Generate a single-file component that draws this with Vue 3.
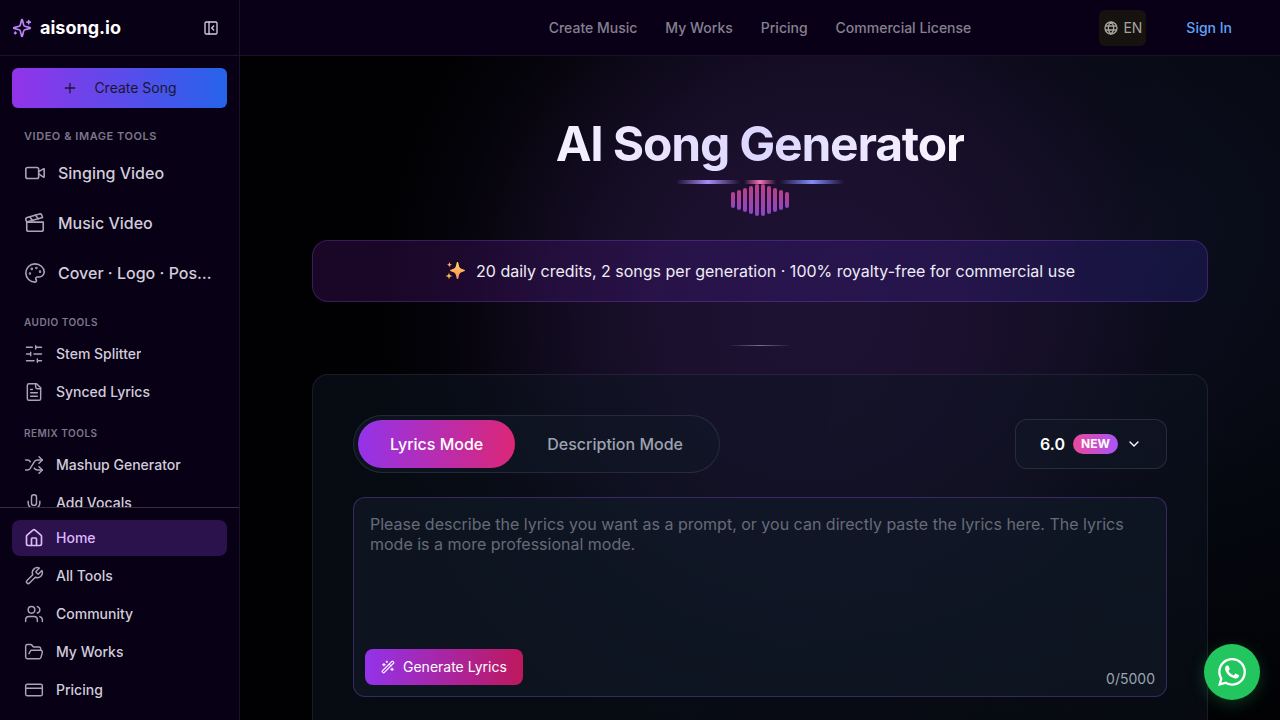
<script setup>
    import { ref } from 'vue'

    const icons = {
        video: '<path d="m16 13 5.223 3.482a.5.5 0 0 0 .777-.416V7.87a.5.5 0 0 0-.752-.432L16 10.5"/><rect x="2" y="6" width="14" height="12" rx="2"/>',
        clapper: '<path d="M20.2 6 3 11l-.9-2.4c-.3-1.1.3-2.2 1.3-2.5l13.5-4c1.1-.3 2.2.3 2.5 1.3Z"/><path d="m6.2 5.3 3.1 3.9"/><path d="m12.4 3.4 3.1 4"/><path d="M3 11h18v8a2 2 0 0 1-2 2H5a2 2 0 0 1-2-2Z"/>',
        palette: '<circle cx="13.5" cy="6.5" r=".5" fill="currentColor"/><circle cx="17.5" cy="10.5" r=".5" fill="currentColor"/><circle cx="8.5" cy="7.5" r=".5" fill="currentColor"/><circle cx="6.5" cy="12.5" r=".5" fill="currentColor"/><path d="M12 2C6.5 2 2 6.5 2 12s4.5 10 10 10c.926 0 1.648-.746 1.648-1.688 0-.437-.18-.835-.437-1.125-.29-.289-.438-.652-.438-1.125a1.64 1.64 0 0 1 1.668-1.668h1.996c3.051 0 5.555-2.503 5.555-5.554C21.965 6.012 17.461 2 12 2z"/>',
        sliders: '<path d="M21 4h-7M10 4H3M21 12h-9M8 12H3M21 20h-5M12 20H3M14 2v4M8 10v4M16 18v4"/>',
        file: '<path d="M15 2H6a2 2 0 0 0-2 2v16a2 2 0 0 0 2 2h12a2 2 0 0 0 2-2V7Z"/><path d="M14 2v4a2 2 0 0 0 2 2h4"/><path d="M10 9H8M16 13H8M16 17H8"/>',
        shuffle: '<path d="m18 14 4 4-4 4"/><path d="m18 2 4 4-4 4"/><path d="M2 18h1.973a4 4 0 0 0 3.3-1.7l5.454-8.6a4 4 0 0 1 3.3-1.7H22"/><path d="M2 6h1.972a4 4 0 0 1 3.6 2.2"/><path d="M22 18h-6.041a4 4 0 0 1-3.3-1.8l-.359-.45"/>',
        mic: '<path d="M12 2a3 3 0 0 0-3 3v7a3 3 0 0 0 6 0V5a3 3 0 0 0-3-3Z"/><path d="M19 10v2a7 7 0 0 1-14 0v-2"/><path d="M12 19v3"/>',
        home: '<path d="M15 21v-8a1 1 0 0 0-1-1h-4a1 1 0 0 0-1 1v8"/><path d="M3 10a2 2 0 0 1 .709-1.528l7-5.999a2 2 0 0 1 2.582 0l7 5.999A2 2 0 0 1 21 10v9a2 2 0 0 1-2 2H5a2 2 0 0 1-2-2z"/>',
        wrench: '<path d="M14.7 6.3a1 1 0 0 0 0 1.4l1.6 1.6a1 1 0 0 0 1.4 0l3.77-3.77a6 6 0 0 1-7.94 7.94l-6.91 6.91a2.12 2.12 0 0 1-3-3l6.91-6.91a6 6 0 0 1 7.94-7.94l-3.76 3.76z"/>',
        users: '<path d="M16 21v-2a4 4 0 0 0-4-4H6a4 4 0 0 0-4 4v2"/><circle cx="9" cy="7" r="4"/><path d="M22 21v-2a4 4 0 0 0-3-3.87"/><path d="M16 3.13a4 4 0 0 1 0 7.75"/>',
        folder: '<path d="m6 14 1.5-2.9A2 2 0 0 1 9.24 10H20a2 2 0 0 1 1.94 2.5l-1.54 6a2 2 0 0 1-1.95 1.5H4a2 2 0 0 1-2-2V5a2 2 0 0 1 2-2h3.9a2 2 0 0 1 1.69.9l.81 1.2a2 2 0 0 0 1.67.9H18a2 2 0 0 1 2 2v2"/>',
        card: '<rect x="2" y="5" width="20" height="14" rx="2"/><path d="M2 10h20"/>'
    }

    const videoTools = [
        { label: 'Singing Video', icon: 'video' },
        { label: 'Music Video', icon: 'clapper' },
        { label: 'Cover · Logo · Poster', icon: 'palette' }
    ]
    const toolGroups = [
        {
            title: 'Audio Tools',
            items: [
                { label: 'Stem Splitter', icon: 'sliders' },
                { label: 'Synced Lyrics', icon: 'file' }
            ]
        },
        {
            title: 'Remix Tools',
            items: [
                { label: 'Mashup Generator', icon: 'shuffle' },
                { label: 'Add Vocals', icon: 'mic' }
            ]
        }
    ]
    const mainLinks = [
        { label: 'Home', icon: 'home' },
        { label: 'All Tools', icon: 'wrench' },
        { label: 'Community', icon: 'users' },
        { label: 'My Works', icon: 'folder' },
        { label: 'Pricing', icon: 'card' }
    ]
    const topLinks = ['Create Music', 'My Works', 'Pricing', 'Commercial License']
    const modes = ['Lyrics Mode', 'Description Mode']
    const bars = [16, 20, 24, 28, 32, 32, 28, 24, 20, 16]

    const current = ref('Home')
    const mode = ref('Lyrics Mode')
    const version = ref('6.0')
    const lyrics = ref('')
</script>

<template>
    <div class="layout">
        <aside class="sidebar">
            <div class="brand">
                <a href="#" class="logo">
                    <svg class="icon" viewBox="0 0 24 24">
                        <path d="M9.937 15.5A2 2 0 0 0 8.5 14.063l-6.135-1.582a.5.5 0 0 1 0-.962L8.5 9.936A2 2 0 0 0 9.937 8.5l1.582-6.135a.5.5 0 0 1 .963 0L14.063 8.5A2 2 0 0 0 15.5 9.937l6.135 1.581a.5.5 0 0 1 0 .964L15.5 14.063a2 2 0 0 0-1.437 1.437l-1.582 6.135a.5.5 0 0 1-.963 0z" />
                        <path d="M20 3v4M22 5h-4M4 17v2M5 18H3" />
                    </svg>
                    <span>aisong.io</span>
                </a>
                <button class="collapse" aria-label="Collapse sidebar">
                    <svg class="icon" viewBox="0 0 24 24">
                        <rect x="3" y="3" width="18" height="18" rx="2" />
                        <path d="M9 3v18M16 15l-3-3 3-3" />
                    </svg>
                </button>
            </div>
            <button class="create">
                <svg class="icon" viewBox="0 0 24 24"><path d="M5 12h14M12 5v14" /></svg>
                <span>Create Song</span>
            </button>
            <nav class="tools">
                <h2 class="group-title large">Video &amp; Image Tools</h2>
                <ul class="large-list">
                    <li v-for="item in videoTools" :key="item.label">
                        <a href="#" class="side-link large">
                            <svg class="icon" viewBox="0 0 24 24" v-html="icons[item.icon]"></svg>
                            <span>{{ item.label }}</span>
                        </a>
                    </li>
                </ul>
                <template v-for="group in toolGroups" :key="group.title">
                    <h2 class="group-title">{{ group.title }}</h2>
                    <ul class="small-list">
                        <li v-for="item in group.items" :key="item.label">
                            <a href="#" class="side-link">
                                <svg class="icon" viewBox="0 0 24 24" v-html="icons[item.icon]"></svg>
                                <span>{{ item.label }}</span>
                            </a>
                        </li>
                    </ul>
                </template>
            </nav>
            <nav class="bottom">
                <ul class="small-list">
                    <li v-for="item in mainLinks" :key="item.label">
                        <a href="#" class="side-link" :class="{ active: current === item.label }" @click.prevent="current = item.label">
                            <svg class="icon" viewBox="0 0 24 24" v-html="icons[item.icon]"></svg>
                            <span>{{ item.label }}</span>
                        </a>
                    </li>
                </ul>
            </nav>
        </aside>

        <div class="page">
            <header class="topbar">
                <nav class="top-links">
                    <a v-for="link in topLinks" :key="link" href="#">{{ link }}</a>
                </nav>
                <div class="account">
                    <button class="lang">
                        <svg viewBox="0 0 24 24">
                            <circle cx="12" cy="12" r="9" />
                            <path d="M12 3c-3 2.5-4 5.5-4 9s1 6.5 4 9c3-2.5 4-5.5 4-9s-1-6.5-4-9M4 9h16M4 15h16" />
                        </svg>
                        <span>EN</span>
                    </button>
                    <a href="#" class="sign-in">Sign In</a>
                </div>
            </header>

            <main class="content">
                <h1>AI Song Generator</h1>
                <div class="glow-lines"><i></i><i></i><i></i></div>
                <div class="wave">
                    <span v-for="(h, i) in bars" :key="i" :style="{ height: h + 'px' }"></span>
                </div>

                <p class="banner">
                    <svg viewBox="0 0 20 20">
                        <defs>
                            <linearGradient id="gold" x1="0" y1="0" x2="0" y2="1">
                                <stop offset="0" stop-color="#ffd763" />
                                <stop offset="1" stop-color="#fb8a55" />
                            </linearGradient>
                        </defs>
                        <g fill="url(#gold)">
                            <path d="M12.5 1c.6 0 .8.5 1 1.5.7 4 1.5 5 5 6 1 .3 1.5.5 1.5 1s-.5.8-1.5 1c-3.5 1-4.3 2-5 6-.2 1-.4 1.5-1 1.5s-.8-.5-1-1.5c-.7-4-1.5-5-5-6-1-.2-1.5-.5-1.5-1s.5-.7 1.5-1c3.5-1 4.3-2 5-6 .2-1 .4-1.5 1-1.5z" />
                            <path d="M4.5 1c.5 2 .8 2.3 2.7 2.8-1.9.5-2.2.8-2.7 2.7C4 4.6 3.700 4.300 1.800 3.800 3.700 3.300 4 3 4.500 1z" />
                            <path d="M4 11.500c.5 2.500 1 3 3.500 3.500-2.500.5-3 1-3.500 3.500C3.500 16 3 15.500.5 15c2.500-.5 3-1 3.500-3.500z" />
                        </g>
                    </svg>
                    <span>20 daily credits, 2 songs per generation · 100% royalty-free for commercial use</span>
                </p>
                <div class="divider"></div>

                <section class="panel">
                    <div class="panel-head">
                        <div class="modes">
                            <button v-for="m in modes" :key="m" :class="{ active: mode === m }" @click="mode = m">{{ m }}</button>
                        </div>
                        <label class="version">
                            <select v-model="version" aria-label="Model version">
                                <option>6.0</option>
                                <option>5.0</option>
                            </select>
                            <span class="badge">NEW</span>
                            <svg class="icon" viewBox="0 0 24 24"><path d="m6 9 6 6 6-6" /></svg>
                        </label>
                    </div>
                    <div class="editor">
                        <textarea v-model="lyrics" maxlength="5000" aria-label="Lyrics" placeholder="Please describe the lyrics you want as a prompt, or you can directly paste the lyrics here. The lyrics mode is a more professional mode."></textarea>
                        <div class="editor-foot">
                            <button class="generate">
                                <svg class="icon" viewBox="0 0 24 24">
                                    <path d="m21.64 3.64-1.28-1.28a1.21 1.21 0 0 0-1.72 0L2.36 18.64a1.21 1.21 0 0 0 0 1.72l1.28 1.28a1.2 1.2 0 0 0 1.72 0L21.64 5.36a1.2 1.2 0 0 0 0-1.72" />
                                    <path d="m14 7 3 3M5 6v4M19 14v4M10 2v2M7 8H3M21 16h-4M11 3H9" />
                                </svg>
                                <span>Generate Lyrics</span>
                            </button>
                            <span class="count">{{ lyrics.length }}/5000</span>
                        </div>
                    </div>
                </section>
            </main>
        </div>

        <a href="#" class="whatsapp" aria-label="WhatsApp">
            <svg viewBox="0 0 24 24">
                <path d="M17.472 14.382c-.297-.149-1.758-.867-2.03-.967-.273-.099-.471-.148-.67.15-.197.297-.767.966-.94 1.164-.173.199-.347.223-.644.075-.297-.15-1.255-.463-2.39-1.475-.883-.788-1.48-1.761-1.653-2.059-.173-.297-.018-.458.13-.606.134-.133.298-.347.446-.52.149-.174.198-.298.298-.497.099-.198.05-.371-.025-.52-.075-.149-.669-1.612-.916-2.207-.242-.579-.487-.5-.669-.51-.173-.008-.371-.01-.57-.01-.198 0-.52.074-.792.372-.272.297-1.04 1.016-1.04 2.479 0 1.462 1.065 2.875 1.213 3.074.149.198 2.096 3.2 5.077 4.487.709.306 1.262.489 1.694.625.712.227 1.36.195 1.871.118.571-.085 1.758-.719 2.006-1.413.248-.694.248-1.289.173-1.413-.074-.124-.272-.198-.57-.347m-5.421 7.403h-.004a9.87 9.87 0 0 1-5.031-1.378l-.361-.214-3.741.982.998-3.648-.235-.374a9.86 9.86 0 0 1-1.51-5.26c.001-5.45 4.436-9.884 9.888-9.884 2.64 0 5.122 1.03 6.988 2.898a9.825 9.825 0 0 1 2.893 6.994c-.003 5.45-4.437 9.884-9.885 9.884m8.413-18.297A11.815 11.815 0 0 0 12.05 0C5.495 0 .16 5.335.157 11.892c0 2.096.547 4.142 1.588 5.945L.057 24l6.305-1.654a11.882 11.882 0 0 0 5.683 1.448h.005c6.554 0 11.89-5.335 11.893-11.893a11.821 11.821 0 0 0-3.48-8.413Z" />
            </svg>
        </a>
    </div>
</template>

<style>
    body{
        background: #000;
    }
</style>

<style scoped>
    *{
        box-sizing: border-box;
    }
    .layout{
        display: flex;
        height: 100vh;
        overflow: hidden;
        font-family: Inter, "Liberation Sans", sans-serif;
        font-size: 14px;
        line-height: 20px;
        color: #d1cdda;
    }
    a{
        color: inherit;
        text-decoration: none;
    }
    button, select, textarea{
        font: inherit;
        color: inherit;
        border: 0;
        background: none;
        padding: 0;
        margin: 0;
    }
    button, select{
        cursor: pointer;
    }
    ul{
        list-style: none;
        margin: 0;
        padding: 0;
    }
    .icon{
        width: 20px;
        height: 20px;
        flex: none;
        fill: none;
        stroke: currentColor;
        stroke-width: 2;
        stroke-linecap: round;
        stroke-linejoin: round;
    }

    /* sidebar */
    .sidebar{
        display: flex;
        flex-direction: column;
        flex: none;
        width: 240px;
        background: #080015;
        border-right: 1px solid #1a1426;
    }
    .brand{
        display: flex;
        align-items: center;
        justify-content: space-between;
        height: 56px;
        flex: none;
        padding: 0 20px 0 12px;
        border-bottom: 1px solid #1a1426;
    }
    .logo{
        display: flex;
        align-items: center;
        gap: 8px;
        font-size: 18px;
        font-weight: 700;
        color: #fff;
    }
    .logo .icon{
        color: #c084fc;
    }
    .collapse{
        display: flex;
    }
    .collapse .icon{
        width: 16px;
        height: 16px;
    }
    .create{
        display: flex;
        align-items: center;
        justify-content: center;
        gap: 16px;
        height: 40px;
        flex: none;
        margin: 12px 12px 0;
        border-radius: 6px;
        background: linear-gradient(90deg, #9333ea, #2563eb);
        color: #1b1530;
    }
    .create .icon{
        width: 16px;
        height: 16px;
    }
    .tools{
        flex: 1;
        min-height: 0;
        overflow: hidden;
        padding: 20px 12px 0;
    }
    .group-title{
        margin: 16px 0 7px;
        padding: 0 12px;
        font-size: 10px;
        line-height: 14px;
        font-weight: 600;
        letter-spacing: 0.05em;
        text-transform: uppercase;
        color: #7c7789;
    }
    .group-title.large{
        margin: 0 0 7px;
        font-size: 11px;
        line-height: 16px;
    }
    .large-list{
        display: grid;
        grid-template-columns: minmax(0, 1fr);
        gap: 6px;
        margin-bottom: 20px;
    }
    .small-list{
        display: grid;
        grid-template-columns: minmax(0, 1fr);
        gap: 2px;
    }
    .side-link{
        display: flex;
        align-items: center;
        gap: 12px;
        height: 36px;
        padding: 0 12px;
        border-radius: 8px;
        font-weight: 500;
    }
    .side-link .icon{
        stroke-width: 1.75;
        color: #aaa5b5;
    }
    .side-link span{
        overflow: hidden;
        white-space: nowrap;
        text-overflow: ellipsis;
    }
    .side-link.large{
        height: 44px;
        font-size: 16px;
        line-height: 24px;
    }
    .side-link.large .icon{
        width: 22px;
        height: 22px;
    }
    .side-link.active{
        background: #2b124c;
        color: #dcb9fd;
    }
    .side-link.active .icon{
        stroke-width: 2;
        color: #dcb9fd;
    }
    .bottom{
        flex: none;
        padding: 12px;
        border-top: 1px solid #342e40;
    }

    /* top bar */
    .page{
        display: flex;
        flex-direction: column;
        flex: 1;
        min-width: 0;
        background:
            radial-gradient(ellipse 42% 64% at 55% 43%, #1d1232 0%, rgba(28, 17, 48, 0.95) 35%, rgba(24, 15, 42, 0.7) 60%, rgba(16, 10, 30, 0.3) 82%, transparent 100%),
            radial-gradient(ellipse 48% 75% at 88% 32%, #0b0f1e, transparent),
            #010103;
    }
    .topbar{
        display: grid;
        grid-template-columns: 1fr auto 1fr;
        align-items: center;
        height: 56px;
        flex: none;
        padding: 0 32px;
        background: #090017;
        border-bottom: 1px solid #171225;
    }
    .top-links{
        grid-column: 2;
        display: flex;
        gap: 28px;
        font-weight: 500;
        color: #85808f;
    }
    .account{
        display: flex;
        align-items: center;
        justify-content: flex-end;
        gap: 24px;
    }
    .lang{
        display: flex;
        align-items: center;
        gap: 4px;
        height: 36px;
        padding: 0 4px;
        border-radius: 6px;
        background: #15120f;
        color: #a8a49f;
    }
    .lang svg{
        width: 16px;
        height: 16px;
        fill: none;
        stroke: currentColor;
        stroke-width: 2;
    }
    .sign-in{
        padding: 0 16px;
        font-weight: 500;
        color: #60a5fa;
    }

    /* content */
    .content{
        flex: 1;
        min-height: 0;
        overflow-y: auto;
        scrollbar-width: none;
        padding: 64px 72px;
    }
    h1{
        width: fit-content;
        margin: 0 auto;
        font-size: 48px;
        line-height: 48px;
        font-weight: 700;
        letter-spacing: -0.025em;
        padding-bottom: 12px;
        background: linear-gradient(90deg, #f5f1ff, #ddd6fe 50%, #faf7ff);
        background-clip: text;
        color: transparent;
    }
    .glow-lines{
        display: flex;
        justify-content: center;
        gap: 4px;
    }
    .glow-lines i{
        width: 64px;
        height: 4px;
        border-radius: 2px;
        background: linear-gradient(90deg, transparent, #a78bfa, transparent);
    }
    .glow-lines i:nth-child(2){
        width: 32px;
        background: linear-gradient(90deg, transparent, #f472b6, transparent);
    }
    .glow-lines i:nth-child(3){
        background: linear-gradient(90deg, transparent, #818cf8, transparent);
    }
    .wave{
        display: flex;
        align-items: center;
        justify-content: center;
        gap: 2px;
        height: 32px;
    }
    .wave span{
        width: 4px;
        border-radius: 2px;
        background: linear-gradient(#bd3f86, #8c46c4);
    }
    .banner{
        display: flex;
        align-items: center;
        justify-content: center;
        gap: 11px;
        margin: 24px 0 0;
        min-height: 62px;
        border: 1px solid rgba(168, 85, 247, 0.25);
        border-radius: 16px;
        background: linear-gradient(90deg, rgba(88, 20, 120, 0.3), rgba(70, 27, 140, 0.3) 50%, rgba(40, 36, 130, 0.35));
        font-size: 16px;
        line-height: 24px;
        color: #f0ecf6;
    }
    .banner svg{
        width: 20px;
        height: 20px;
    }
    .divider{
        width: 64px;
        height: 1px;
        margin: 43px auto 28px;
        background: linear-gradient(90deg, transparent, #77718a, transparent);
    }
    .panel{
        padding: 40px;
        border: 1px solid rgba(148, 163, 184, 0.13);
        border-radius: 16px;
        background: linear-gradient(90deg, rgba(13, 22, 35, 0.5), rgba(13, 20, 32, 0.45));
    }
    .panel-head{
        display: flex;
        align-items: center;
        justify-content: space-between;
        margin-bottom: 24px;
    }
    .modes{
        display: flex;
        padding: 4px;
        border: 1px solid rgba(148, 163, 184, 0.16);
        border-radius: 29px;
        background: rgba(17, 24, 39, 0.6);
    }
    .modes button{
        height: 48px;
        padding: 0 32px;
        border-radius: 24px;
        font-size: 16px;
        font-weight: 500;
        color: #9ca3af;
    }
    .modes .active{
        background: linear-gradient(90deg, #9333ea, #db2777);
        color: #fff;
    }
    .version{
        display: flex;
        align-items: center;
        gap: 8px;
        height: 50px;
        padding: 0 24px;
        border: 1px solid rgba(148, 163, 184, 0.18);
        border-radius: 12px;
        background: rgba(17, 24, 39, 0.6);
        color: #fff;
    }
    .version select{
        appearance: none;
        font-size: 16px;
        font-weight: 600;
    }
    .version option{
        color: #111827;
    }
    .badge{
        padding: 0 8px;
        border-radius: 10px;
        background: linear-gradient(90deg, #ec4899, #a855f7);
        font-size: 12px;
        font-weight: 700;
    }
    .version .icon{
        width: 16px;
        height: 16px;
    }
    .editor{
        height: 200px;
        display: flex;
        flex-direction: column;
        border: 1px solid rgba(124, 75, 200, 0.38);
        border-radius: 12px;
        background: rgba(17, 26, 40, 0.65);
    }
    .editor textarea{
        flex: 1;
        width: 100%;
        padding: 16px;
        resize: none;
        outline: none;
        font-size: 16px;
    }
    .editor textarea::placeholder{
        color: #666b78;
        opacity: 1;
    }
    .editor-foot{
        display: flex;
        justify-content: space-between;
        align-items: flex-end;
        padding: 0 11px 11px;
    }
    .generate{
        display: flex;
        align-items: center;
        gap: 8px;
        height: 36px;
        padding: 0 16px;
        border-radius: 8px;
        background: linear-gradient(90deg, #9333ea, #be185d);
        color: #fff;
    }
    .generate .icon{
        width: 14px;
        height: 14px;
    }
    .count{
        line-height: 12px;
        color: #9ca3af;
    }
    .whatsapp{
        position: fixed;
        right: 20px;
        bottom: 20px;
        display: grid;
        place-items: center;
        width: 56px;
        height: 56px;
        border-radius: 50%;
        background: #22c55e;
        box-shadow: 0 4px 16px rgba(34, 197, 94, 0.25);
    }
    .whatsapp svg{
        width: 28px;
        height: 28px;
        fill: #fff;
    }
</style>
